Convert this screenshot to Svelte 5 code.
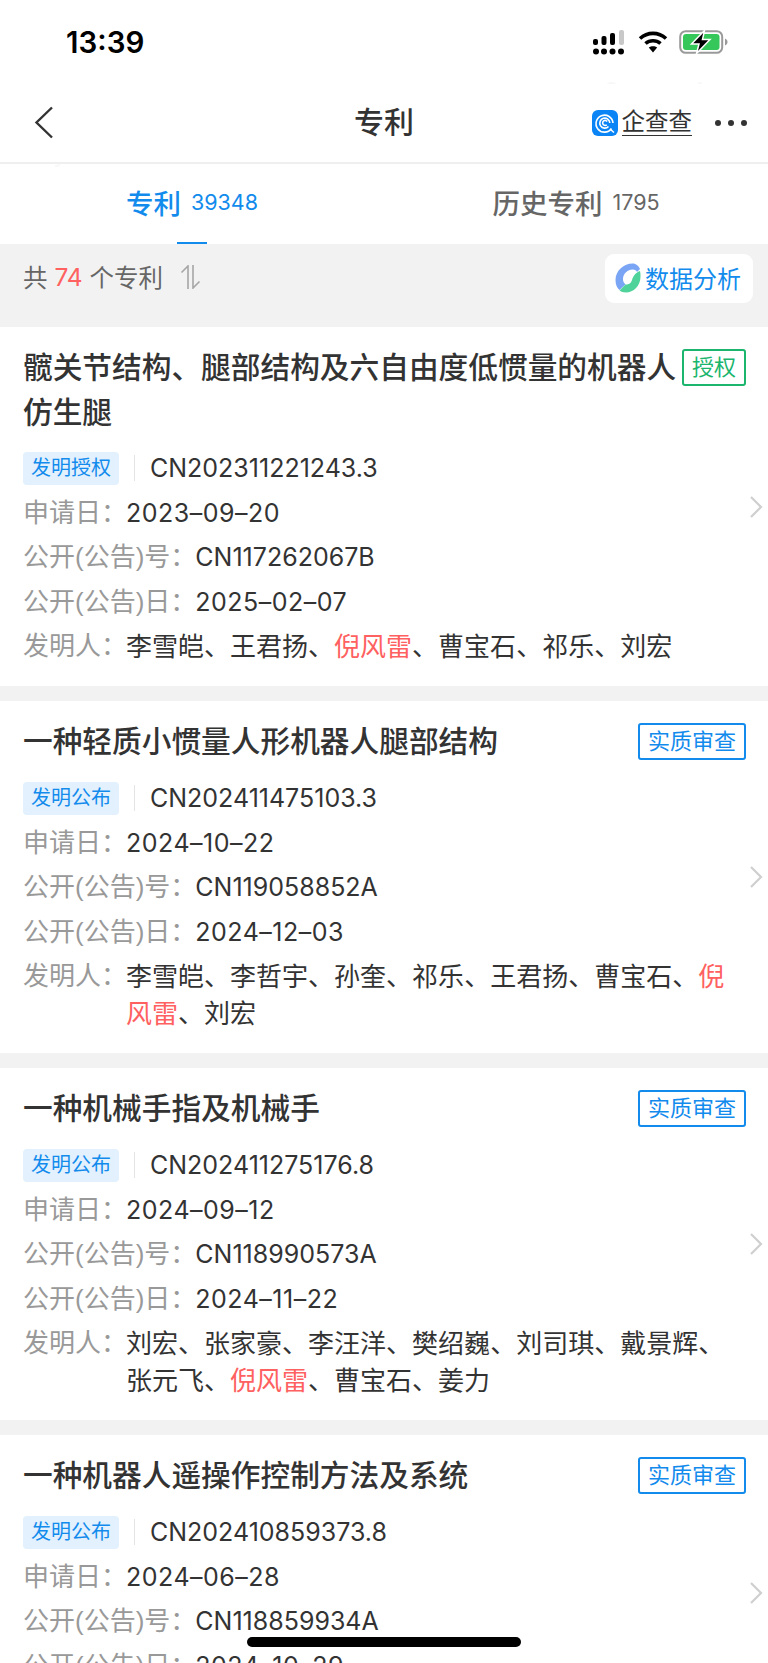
<script lang="ts">
	interface Patent {
		title: string;
		status: string;
		kind: string;
		appNo: string;
		appDate: string;
		pubNo: string;
		pubDate: string;
		inventors: string[];
	}

	const patents: Patent[] = [
		{
			title: '髋关节结构、腿部结构及六自由度低惯量的机器人仿生腿',
			status: '授权',
			kind: '发明授权',
			appNo: 'CN202311221243.3',
			appDate: '2023–09–20',
			pubNo: 'CN117262067B',
			pubDate: '2025–02–07',
			inventors: ['李雪皑', '王君扬', '倪风雷', '曹宝石', '祁乐', '刘宏']
		},
		{
			title: '一种轻质小惯量人形机器人腿部结构',
			status: '实质审查',
			kind: '发明公布',
			appNo: 'CN202411475103.3',
			appDate: '2024–10–22',
			pubNo: 'CN119058852A',
			pubDate: '2024–12–03',
			inventors: ['李雪皑', '李哲宇', '孙奎', '祁乐', '王君扬', '曹宝石', '倪风雷', '刘宏']
		},
		{
			title: '一种机械手指及机械手',
			status: '实质审查',
			kind: '发明公布',
			appNo: 'CN202411275176.8',
			appDate: '2024–09–12',
			pubNo: 'CN118990573A',
			pubDate: '2024–11–22',
			inventors: ['刘宏', '张家豪', '李汪洋', '樊绍巍', '刘司琪', '戴景辉', '张元飞', '倪风雷', '曹宝石', '姜力']
		},
		{
			title: '一种机器人遥操作控制方法及系统',
			status: '实质审查',
			kind: '发明公布',
			appNo: 'CN202410859373.8',
			appDate: '2024–06–28',
			pubNo: 'CN118859934A',
			pubDate: '2024–10–29',
			inventors: ['刘宏', '倪风雷']
		}
	];
</script>

<div class="page">
	<span class="mark mark-top">8eyt4sm</span>
	<span class="mark mark-left">8eyt4sm</span>

	<div class="status-bar">
		<span class="time">13:39</span>
		<div class="status-icons">
			<svg width="32" height="26" viewBox="0 0 32 26" fill="#000">
				<rect x="0" y="9" width="5" height="6" rx="2" />
				<rect x="8.500" y="6" width="5" height="9" rx="2" />
				<rect x="17" y="3" width="5" height="12" rx="2" />
				<rect x="26" y="0" width="5" height="15" rx="2" fill="#c8c8c8" />
				<circle cx="3" cy="21.500" r="3" />
				<circle cx="11" cy="21.500" r="3" />
				<circle cx="19.500" cy="21.500" r="3" />
				<circle cx="28" cy="21.500" r="3" />
			</svg>
			<svg class="wifi" width="30" height="22" viewBox="0 0 30 22" fill="none" stroke="#000" stroke-width="3.600">
				<path d="M2 7.500C9.500 0.700 20.500 0.700 28 7.500" />
				<path d="M7.500 12.500C11.800 8.800 18.200 8.800 22.500 12.500" />
				<path d="M15 21.500L10.800 16.500C13.200 14.700 16.800 14.700 19.200 16.500Z" fill="#000" stroke="none" />
			</svg>
			<svg class="battery" width="49" height="24" viewBox="0 0 49 24" fill="none">
				<rect x="1.200" y="1.200" width="42" height="21.600" rx="5.500" stroke="#9a9a9a" stroke-width="2" />
				<rect x="4" y="4" width="36.500" height="16" rx="3" fill="#35c759" />
				<path d="M46 8.500C47.800 9.300 48.500 10.500 48.500 12C48.500 13.500 47.800 14.700 46 15.500Z" fill="#9a9a9a" />
				<path d="M25.500 0.500L12.500 14H20L17.500 23.500L31 9.500H23.500Z" fill="#000" stroke="#fff" stroke-width="1.500" />
			</svg>
		</div>
	</div>

	<header class="nav">
		<svg class="back" width="20" height="33" viewBox="0 0 20 33" fill="none" stroke="#333" stroke-width="2.400">
			<path d="M18 1.500L2.500 16.500L18 31.500" />
		</svg>
		<h1>专利</h1>
		<div class="nav-right">
			<svg class="qcc" width="26" height="26" viewBox="0 0 26 26">
				<rect width="26" height="26" rx="6" fill="#0b84f5" />
				<g fill="none" stroke="#fff" stroke-width="1.600">
					<path d="M19.500 18.500A8.500 8.500 0 1 1 21 13" />
					<path d="M16.500 16.500A5 5 0 1 1 17.800 13" />
					<path d="M14.800 14.800A2.500 2.500 0 1 1 15.200 11.500" />
					<path d="M18 19L22 22.500" />
				</g>
			</svg>
			<span class="qcc-name">企查查</span>
			<div class="dots"><i></i><i></i><i></i></div>
		</div>
	</header>

	<nav class="tabs">
		<div class="tab active">专利 <small>39348</small></div>
		<div class="tab">历史专利 <small>1795</small></div>
	</nav>

	<div class="toolbar">
		<div class="total">
			共 <em>74</em> 个专利
			<svg width="22" height="24" viewBox="0 0 22 24" fill="none" stroke="#a6a6a6" stroke-width="1.600">
				<path d="M9 24V1L2.500 7.500" />
				<path d="M14 0V23L20.500 16.500" />
			</svg>
		</div>
		<button class="analyse">
			<svg width="26" height="30" viewBox="0 0 26 30">
				<path d="M17.500 0.500C9 0.500 0.500 7.500 0.500 17C0.500 21.500 2 25 4.500 27L10.500 21.500C9 20 8 18.500 8 16C8 10.500 13 6.500 17.500 6.500C20 6.500 21.500 7.500 22 9L25 6C24 3 21 0.500 17.500 0.500Z" fill="#7aa5f5" />
				<path d="M25 8C25.500 10 25.500 11.500 25.500 13.500C25.500 23 18.500 29.500 11 29.500C8 29.500 6 28.500 4.500 27.500L10.500 21.500C14.500 21.500 16 20 17 17C18 13.500 20 10 25 8Z" fill="#4fd39a" />
			</svg>
			<span>数据分析</span>
		</button>
	</div>

	{#each patents as p}
		<article class="card">
			<div class="head">
				<h2>{p.title}</h2>
				<span class="status" class:granted={p.status === '授权'}>{p.status}</span>
			</div>
			<div class="row no-row">
				<span class="kind">{p.kind}</span>
				<span class="value">{p.appNo}</span>
			</div>
			<div class="row"><span class="label">申请日：</span><span class="value date">{p.appDate}</span></div>
			<div class="row"><span class="label">公开(公告)号：</span><span class="value">{p.pubNo}</span></div>
			<div class="row"><span class="label">公开(公告)日：</span><span class="value date">{p.pubDate}</span></div>
			<div class="row inventor-row">
				<span class="label">发明人：</span>
				<span class="value inventors">
					{#each p.inventors as name, i}<span class:hit={name === '倪风雷'}>{name}</span>{i < p.inventors.length - 1 ? '、' : ''}{/each}
				</span>
			</div>
			<svg class="chevron" width="14" height="24" viewBox="0 0 14 24" fill="none" stroke="#cfcfcf" stroke-width="2.200">
				<path d="M2 2L12 12L2 22" />
			</svg>
		</article>
	{/each}

	<div class="home-bar"></div>
</div>

<style>
	:global(body) {
		margin: 0;
		background: #f2f2f2;
	}

	.page {
		position: relative;
		height: 1663px;
		overflow: hidden;
		background: #f2f2f2;
		font-family: 'Inter', 'Noto Sans CJK SC', sans-serif;
		color: #333;
	}

	.mark {
		position: absolute;
		font-size: 24px;
		letter-spacing: 9px;
		color: #f8f8f8;
	}

	.mark-top {
		top: 77px;
		left: 604px;
	}

	.mark-left {
		top: 139px;
		left: 7px;
	}

	.status-bar {
		height: 84px;
		background: #fff;
		display: flex;
		align-items: flex-start;
		justify-content: space-between;
		padding: 0 40px 0 66px;
	}

	.time {
		margin-top: 25px;
		font-size: 29.500px;
		line-height: 34px;
		font-weight: 600;
		color: #000;
	}

	.status-icons {
		display: flex;
		align-items: flex-start;
		margin-top: 30px;
	}

	.wifi {
		margin: 1px 0 0 13px;
	}

	.battery {
		margin-left: 11px;
	}

	.nav {
		position: relative;
		height: 78px;
		background: #fff;
		border-bottom: 2px solid #efefef;
		display: flex;
		align-items: center;
		justify-content: center;
	}

	.back {
		position: absolute;
		left: 34px;
		top: 22px;
	}

	h1 {
		margin: 0 0 2px;
		font-size: 30px;
		font-weight: 500;
		line-height: 40px;
	}

	.nav-right {
		position: absolute;
		right: 21px;
		top: 25px;
		display: flex;
		align-items: center;
	}

	.qcc-name {
		margin-left: 4px;
		font-size: 23.500px;
		line-height: 26px;
		border-bottom: 1px solid #333;
	}

	.dots {
		display: flex;
		gap: 7px;
		margin-left: 23px;
	}

	.dots i {
		width: 6px;
		height: 6px;
		border-radius: 50%;
		background: #333;
	}

	.tabs {
		height: 80px;
		background: #fff;
		display: grid;
		grid-template-columns: 1fr 1fr;
	}

	.tab {
		position: relative;
		display: flex;
		align-items: center;
		justify-content: center;
		gap: 10px;
		font-size: 27.500px;
		font-weight: 500;
		color: #666;
		padding-bottom: 4px;
	}

	.tab small {
		font-size: 21.500px;
		font-weight: 400;
	}

	.tab.active {
		color: #128bed;
	}

	.tab.active::after {
		content: '';
		position: absolute;
		left: 50%;
		bottom: 0;
		width: 30px;
		height: 2px;
		margin-left: -15px;
		background: #128bed;
	}

	.toolbar {
		height: 83px;
		display: flex;
		justify-content: space-between;
		align-items: flex-start;
		padding: 10px 15px 0 23px;
		box-sizing: border-box;
	}

	.total {
		display: flex;
		align-items: center;
		height: 45px;
		font-size: 24.500px;
		color: #666;
		white-space: pre;
	}

	.total em {
		font-style: normal;
		color: #ff6060;
	}

	.total svg {
		margin-left: 9px;
	}

	.analyse {
		display: flex;
		align-items: center;
		gap: 4px;
		width: 148px;
		height: 49px;
		padding: 0 0 2px 10px;
		border: 0;
		border-radius: 9px;
		background: #fff;
		font: inherit;
		font-size: 24px;
		color: #128bed;
	}

	.card {
		position: relative;
		background: #fff;
		padding: 18px 22px 21px 23px;
		margin-bottom: 15px;
	}

	.head {
		display: flex;
		align-items: flex-start;
		justify-content: space-between;
		gap: 4px;
		margin-bottom: 15px;
	}

	h2 {
		flex: 1;
		margin: 0;
		font-size: 29.700px;
		line-height: 45px;
		font-weight: 500;
		color: #333;
	}

	.status {
		flex: none;
		margin: 4px 0 5px;
		height: 37px;
		box-sizing: border-box;
		padding: 0 8px;
		border: 2px solid #128bed;
		border-radius: 3px;
		font-size: 22px;
		line-height: 33px;
		color: #128bed;
	}

	.status.granted {
		border-color: #1bb56d;
		color: #1bb56d;
	}

	.row {
		display: flex;
		align-items: flex-start;
		margin-top: 8.500px;
		font-size: 26px;
		line-height: 36px;
	}

	.no-row {
		margin-top: 0;
		height: 36px;
		align-items: center;
	}

	.inventor-row {
		line-height: 37px;
	}

	.kind {
		height: 33px;
		box-sizing: border-box;
		padding: 0 8px;
		border-radius: 4px;
		background: #e2f1fd;
		color: #128bed;
		font-size: 20px;
		line-height: 33px;
	}

	.no-row .value {
		margin-left: 15px;
		padding-left: 15px;
		border-left: 1px solid #e4e4e4;
		line-height: 26px;
	}

	.label {
		flex: none;
		margin-right: -1px;
		font-family: 'Liberation Sans', 'Noto Sans CJK SC', sans-serif;
		color: #999;
	}

	.value {
		color: #333;
		font-size: 25px;
	}

	.value.date {
		letter-spacing: 0.500px;
	}

	.value.inventors {
		flex: 1;
		font-size: 26px;
		padding-right: 18px;
	}

	.hit {
		color: #ff6060;
	}

	.chevron {
		position: absolute;
		right: 5px;
		top: 50%;
		margin-top: -12px;
	}

	.home-bar {
		position: absolute;
		left: 247px;
		top: 1637px;
		width: 274px;
		height: 10px;
		border-radius: 5px;
		background: #000;
	}
</style>
